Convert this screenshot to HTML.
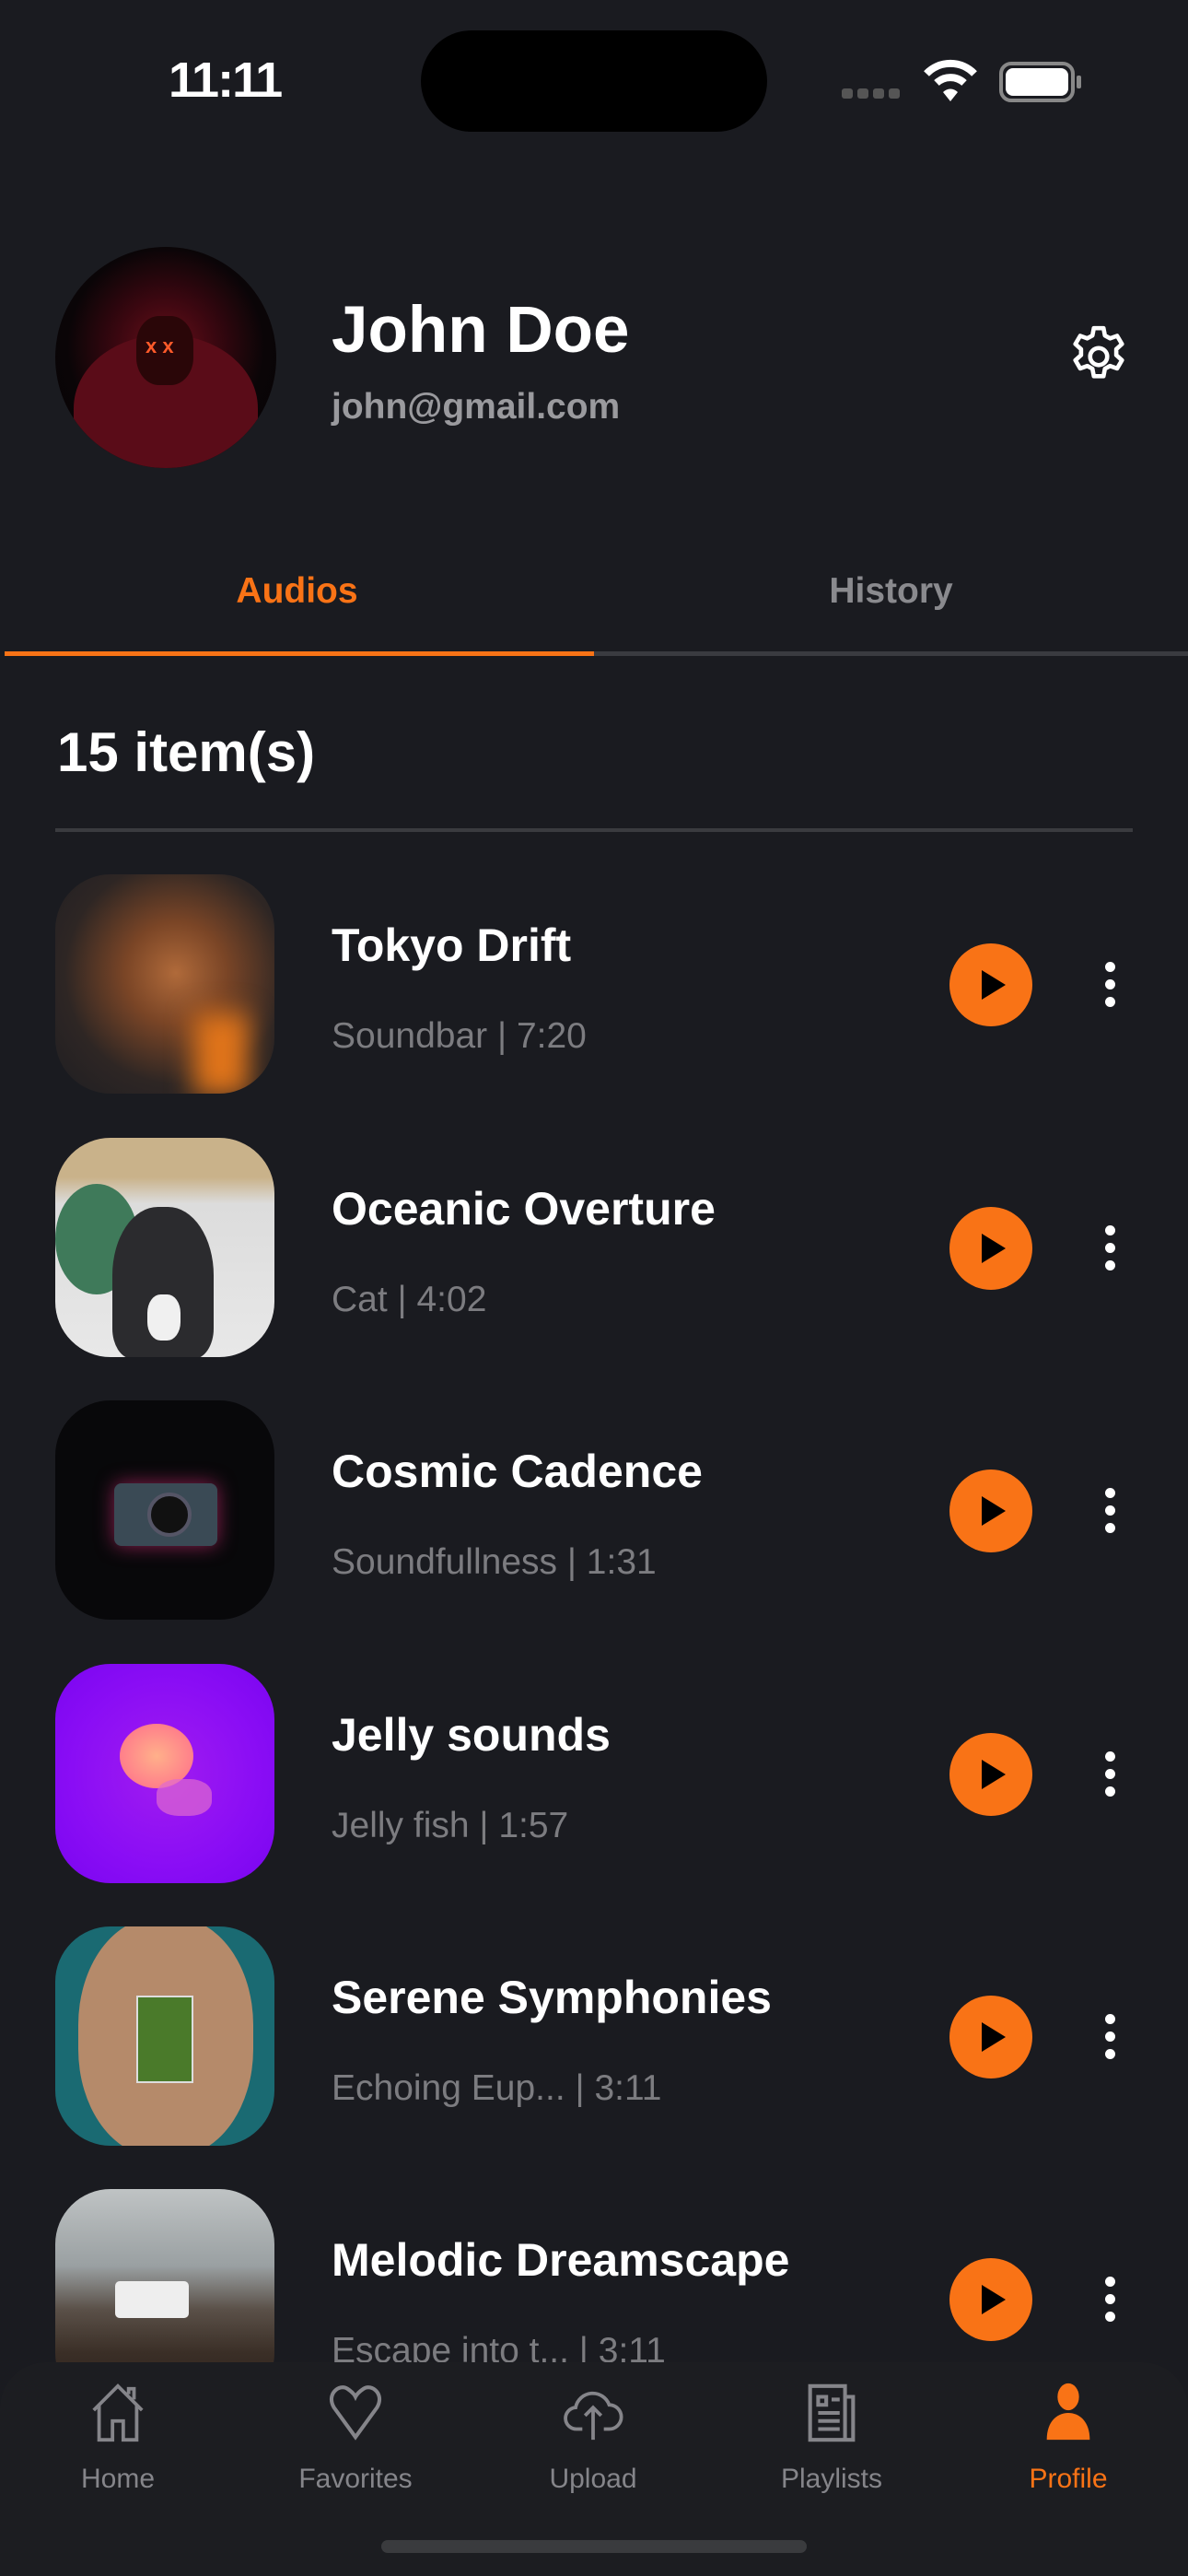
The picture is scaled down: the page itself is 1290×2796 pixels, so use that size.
<!DOCTYPE html>
<html><head><meta charset="utf-8"><style>
*{margin:0;padding:0;box-sizing:border-box}
body{width:1290px;height:2796px;background:#1a1b20;font-family:"Liberation Sans",sans-serif;position:relative;overflow:hidden;color:#fff}
.abs{position:absolute}
.row{position:absolute;left:0;width:1290px;height:240px}
.thumb{position:absolute;left:60px;top:0;width:238px;height:238px;border-radius:60px;overflow:hidden}
.title{position:absolute;left:360px;top:48px;font-size:50px;font-weight:bold;white-space:nowrap}
.sub{position:absolute;left:360px;top:154px;font-size:39px;color:#7c7c80;white-space:nowrap}
.play{position:absolute;left:1031px;top:75px;width:90px;height:90px;border-radius:50%;background:#f97316}
.play:after{content:"";position:absolute;left:35px;top:29px;border-left:26px solid #000;border-top:16px solid transparent;border-bottom:16px solid transparent}
.dots{position:absolute;left:1200px;top:95px;width:12px}
.dots i{display:block;width:11px;height:11px;border-radius:50%;background:#fff;margin-bottom:8px}
.nav{position:absolute;left:0;top:2564px;width:1290px;height:232px;background:#1c1d21;border-radius:50px 50px 0 0}
.tab{position:absolute;top:0;width:200px;text-align:center;font-size:30px;color:#85858a}
.tab svg{display:block;margin:20px auto 0}
.tab span{display:block;margin-top:20px}
</style></head><body>
<div class="abs" style="left:183px;top:56px;font-size:54px;font-weight:bold;letter-spacing:-2px">11:11</div>
<div class="abs" style="left:457px;top:33px;width:376px;height:110px;border-radius:55px;background:#000"></div>
<div class="abs" style="left:914px;top:94px">
<span style="display:inline-block;width:12px;height:11px;background:#555;border-radius:3px;margin-right:5px"></span><span style="display:inline-block;width:12px;height:11px;background:#555;border-radius:3px;margin-right:5px"></span><span style="display:inline-block;width:12px;height:11px;background:#555;border-radius:3px;margin-right:5px"></span><span style="display:inline-block;width:12px;height:11px;background:#555;border-radius:3px"></span></div>
<svg class="abs" style="left:1002px;top:62px" width="60" height="50" viewBox="0 0 60 50"><path d="M4 18 A36 36 0 0 1 56 18" stroke="#fff" stroke-width="8" fill="none"/><path d="M15 28 A22 22 0 0 1 45 28" stroke="#fff" stroke-width="8" fill="none"/><path d="M22 38 L30 48 L38 38 A11 11 0 0 0 22 38Z" fill="#fff"/></svg>
<div class="abs" style="left:1085px;top:67px;width:82px;height:44px;border:4px solid #888;border-radius:13px"><div style="margin:3px;height:30px;background:#fff;border-radius:8px"></div></div>
<div class="abs" style="left:1169px;top:82px;width:5px;height:14px;background:#888;border-radius:2px"></div>

<div class="abs" style="left:60px;top:268px;width:240px;height:240px;border-radius:50%;background:radial-gradient(circle at 50% 45%,#6a0f1a 0%,#3a0710 30%,#0a0507 60%,#050305 100%);overflow:hidden">
<div class="abs" style="left:20px;top:95px;width:200px;height:160px;border-radius:50% 50% 0 0;background:#5a0c18"></div>
<div class="abs" style="left:88px;top:75px;width:62px;height:75px;border-radius:40%;background:#2a0608"></div>
<div class="abs" style="left:98px;top:95px;font-size:22px;color:#ff5a2a;font-weight:bold">x x</div>
</div>
<div class="abs" style="left:360px;top:318px;font-size:71px;font-weight:bold">John Doe</div>
<div class="abs" style="left:360px;top:420px;font-size:39px;font-weight:bold;color:#9a9a9e">john@gmail.com</div>
<svg class="abs" style="left:1156px;top:350px" width="74" height="74" viewBox="0 0 24 24" fill="none" stroke="#fff" stroke-width="1.5" stroke-linejoin="round"><path d="M10.3 2h3.4l.5 2.6 1.8 1 2.5-.9 1.7 2.9-2 1.8v2.1l2 1.8-1.7 2.9-2.5-.9-1.8 1-.5 2.6h-3.4l-.5-2.6-1.8-1-2.5.9-1.7-2.9 2-1.8V9.4l-2-1.8 1.7-2.9 2.5.9 1.8-1z"/><circle cx="12" cy="12" r="3"/></svg>

<div class="abs" style="left:0;top:620px;width:645px;text-align:center;font-size:39px;font-weight:bold;color:#f97316">Audios</div>
<div class="abs" style="left:645px;top:620px;width:645px;text-align:center;font-size:39px;font-weight:bold;color:#8a8a8e">History</div>
<div class="abs" style="left:5px;top:707px;width:1285px;height:5px;background:#3a3b40"></div>
<div class="abs" style="left:5px;top:707px;width:640px;height:5px;background:#f97316"></div>

<div class="abs" style="left:62px;top:782px;font-size:60px;font-weight:bold">15 item(s)</div>
<div class="abs" style="left:60px;top:899px;width:1170px;height:4px;background:#3a3b3f"></div>

<div class="row" style="top:949px">
<div class="thumb" style="background:radial-gradient(ellipse at 55% 45%,#b06a3a 0%,#7a4526 30%,#2e2624 65%,#1e1e22 100%)"><div class="abs" style="left:150px;top:150px;width:60px;height:90px;background:#e0741a;filter:blur(14px)"></div></div>
<div class="title">Tokyo Drift</div><div class="sub">Soundbar | 7:20</div><div class="play"></div><div class="dots"><i></i><i></i><i></i></div></div>

<div class="row" style="top:1235px">
<div class="thumb" style="background:linear-gradient(#c9b28a 0,#c9b28a 18%,#dcdcdc 30%,#e8e8e8 100%)"><div class="abs" style="left:0;top:50px;width:90px;height:120px;background:#3f7a5a;border-radius:50%"></div><div class="abs" style="left:62px;top:75px;width:110px;height:165px;background:#2b2b2e;border-radius:45% 45% 20% 20%"></div><div class="abs" style="left:100px;top:170px;width:36px;height:50px;background:#f0f0f0;border-radius:40%"></div></div>
<div class="title">Oceanic Overture</div><div class="sub">Cat | 4:02</div><div class="play"></div><div class="dots"><i></i><i></i><i></i></div></div>

<div class="row" style="top:1520px">
<div class="thumb" style="background:#08080a"><div class="abs" style="left:64px;top:90px;width:112px;height:68px;background:#3a4a55;border-radius:8px;box-shadow:0 0 20px #8a2050"></div><div class="abs" style="left:100px;top:100px;width:48px;height:48px;border-radius:50%;background:#111;border:4px solid #556"></div></div>
<div class="title">Cosmic Cadence</div><div class="sub">Soundfullness | 1:31</div><div class="play"></div><div class="dots"><i></i><i></i><i></i></div></div>

<div class="row" style="top:1806px">
<div class="thumb" style="background:radial-gradient(circle at 50% 50%,#a01cf0 0%,#8a0df5 60%,#7a05f0 100%)"><div class="abs" style="left:70px;top:65px;width:80px;height:70px;border-radius:50%;background:radial-gradient(#ffb08a,#ff6a8a)"></div><div class="abs" style="left:110px;top:125px;width:60px;height:40px;border-radius:40%;background:#e06ad0;opacity:.7"></div></div>
<div class="title">Jelly sounds</div><div class="sub">Jelly fish | 1:57</div><div class="play"></div><div class="dots"><i></i><i></i><i></i></div></div>

<div class="row" style="top:2091px">
<div class="thumb" style="background:#1a6a72"><div class="abs" style="left:25px;top:-10px;width:190px;height:260px;border-radius:45%;background:#b58a6a"></div><div class="abs" style="left:88px;top:75px;width:62px;height:95px;background:#4a7a2a;border:2px solid #ddd"></div></div>
<div class="title">Serene Symphonies</div><div class="sub">Echoing Eup... | 3:11</div><div class="play"></div><div class="dots"><i></i><i></i><i></i></div></div>

<div class="row" style="top:2376px">
<div class="thumb" style="background:linear-gradient(#bfc3c4 0,#9aa0a2 35%,#5a5048 55%,#3a2e26 75%,#2a221c 100%)"><div class="abs" style="left:65px;top:100px;width:80px;height:40px;background:#eee;border-radius:5px"></div></div>
<div class="title">Melodic Dreamscape</div><div class="sub">Escape into t... | 3:11</div><div class="play"></div><div class="dots"><i></i><i></i><i></i></div></div>

<div class="nav">
<div class="tab" style="left:28px"><svg width="70" height="70" viewBox="0 0 24 24" fill="none" stroke="#85858a" stroke-width="1.3"><path d="M3 11 L12 2 L21 11 M5 9 V22 H10 V15 H14 V22 H19 V9 M16 5 V3 H18 V7"/></svg><span>Home</span></div>
<div class="tab" style="left:286px"><svg width="70" height="70" viewBox="0 0 24 24" fill="none" stroke="#85858a" stroke-width="1.4"><path d="M12 21 L4 10 C1 5 6 1 9 3 C10.5 4 11.5 5 12 6 C12.5 5 13.5 4 15 3 C18 1 23 5 20 10 Z"/></svg><span>Favorites</span></div>
<div class="tab" style="left:544px"><svg width="70" height="70" viewBox="0 0 24 24" fill="none" stroke="#85858a" stroke-width="1.3"><path d="M8 18 H6 A4 4 0 0 1 5.5 10 A6.5 6.5 0 0 1 18 9 A4.5 4.5 0 0 1 18 18 H16 M12 22 V10 M9 13 L12 10 L15 13"/></svg><span>Upload</span></div>
<div class="tab" style="left:803px"><svg width="70" height="70" viewBox="0 0 24 24" fill="none" stroke="#85858a" stroke-width="1.4"><path d="M4 2 H17 V22 H4 Z M17 6 H20 V22 H17 M7 6 H10 V9 H7 Z M12 7 H15 M7 12 H15 M7 15 H15 M7 18 H15"/></svg><span>Playlists</span></div>
<div class="tab" style="left:1060px;color:#f97316"><svg width="70" height="70" viewBox="0 0 24 24" fill="#f97316"><ellipse cx="12" cy="6" rx="4" ry="5"/><path d="M4 22 C4 15 8 12 12 12 C16 12 20 15 20 22 Z"/></svg><span>Profile</span></div>
</div>
<div class="abs" style="left:414px;top:2757px;width:462px;height:14px;border-radius:7px;background:#3a3b3e"></div>
</body></html>
